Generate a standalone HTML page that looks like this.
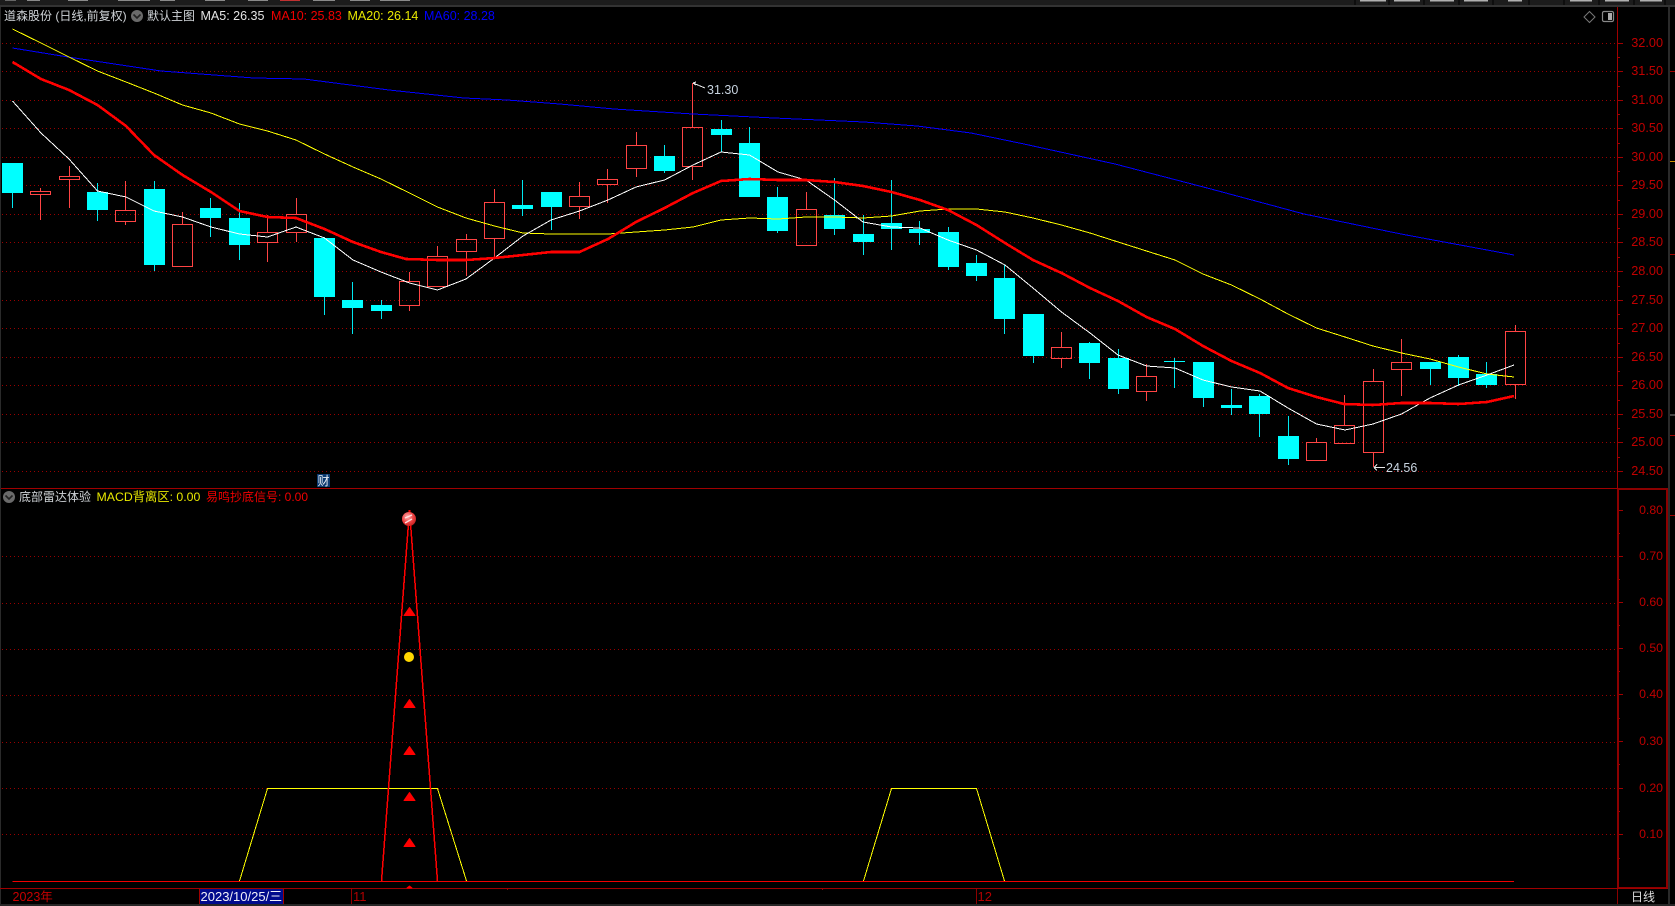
<!DOCTYPE html>
<html lang="zh">
<head>
<meta charset="utf-8">
<title>道森股份 K线</title>
<style>
html,body{margin:0;padding:0;background:#000;width:1675px;height:906px;overflow:hidden}
svg{display:block}
text{font-family:"Liberation Sans","Noto Sans CJK SC",sans-serif;font-size:12px}
.c{shape-rendering:crispEdges}
.ax text{fill:#c00000;text-anchor:end;font-size:12.7px}
.ax2 text{fill:#c00000;text-anchor:end;font-size:12.3px}
</style>
</head>
<body>
<svg width="1675" height="906" viewBox="0 0 1675 906" xmlns="http://www.w3.org/2000/svg">
<defs>
<radialGradient id="b" cx="40%" cy="35%" r="70%"><stop offset="0" stop-color="#ffb0b0"/><stop offset=".6" stop-color="#ee4040"/><stop offset="1" stop-color="#c02020"/></radialGradient>
</defs>
<rect width="1675" height="906" fill="#000"/>

<!-- top bar -->
<g class="c">
<rect x="0" y="0" width="1675" height="5" fill="#1c1c1c"/>
<rect x="0" y="5" width="1675" height="2" fill="#333"/>
<path d="M1355 0v5M1389 0v5M1424 0v5M1459 0v5M1493 0v5M1529 0v5M1564 0v5M1599 0v5M1634 0v5M1665 0v5" stroke="#000" stroke-width="1" fill="none"/>
<path d="M27 0h13v1h-13zM68 0h20v1h-20zM118 0h32v1h-32zM160 0h15v1h-15zM205 0h20v1h-20zM248 0h20v1h-20zM313 0h22v1h-22zM350 0h20v1h-20zM380 0h30v1h-30z" fill="#8a8a8a"/>
<path d="M1360 0h26v1.5h-26zM1394 0h26v1.5h-26zM1430 0h24v1.5h-24zM1464 0h24v1.5h-24zM1508 0h14v1.5h-14zM1570 0h22v1.5h-22zM1605 0h24v1.5h-24zM1640 0h22v1.5h-22z" fill="#b0b0b0"/>
<rect x="280" y="0" width="20" height="1" fill="#c03030"/>
<rect x="5" y="0" width="11" height="1" fill="#666"/>
<rect x="0" y="7" width="1" height="897" fill="#2a2a2a"/>
<rect x="1668" y="7" width="2" height="897" fill="#2a2a2a"/>
<rect x="0" y="904" width="1675" height="2" fill="#262626"/>
</g>

<!-- grid upper -->
<path class="c" d="M2 43.5H1617M2 71.5H1617M2 100.5H1617M2 128.5H1617M2 157.5H1617M2 185.5H1617M2 214.5H1617M2 242.5H1617M2 271.5H1617M2 300.5H1617M2 328.5H1617M2 357.5H1617M2 385.5H1617M2 414.5H1617M2 442.5H1617M2 471.5H1617" stroke="#9a0000" stroke-width="1" stroke-dasharray="1 3" fill="none"/>
<!-- grid lower -->
<path class="c" d="M2 556.5H1617M2 603.5H1617M2 649.5H1617M2 695.5H1617M2 742.5H1617M2 788.5H1617M2 834.5H1617" stroke="#9a0000" stroke-width="1" stroke-dasharray="1 3" fill="none"/>

<!-- axes -->
<g class="c" fill="none" stroke="#a00000" stroke-width="1">
<path d="M1617.5 7V489"/>
<path d="M1617 43.5h6M1617 71.5h6M1617 100.5h6M1617 128.5h6M1617 157.5h6M1617 185.5h6M1617 214.5h6M1617 242.5h6M1617 271.5h6M1617 300.5h6M1617 328.5h6M1617 357.5h6M1617 385.5h6M1617 414.5h6M1617 442.5h6M1617 471.5h6"/>
<path d="M1617 57.5h3M1617 86.5h3M1617 114.5h3M1617 143.5h3M1617 171.5h3M1617 200.5h3M1617 228.5h3M1617 257.5h3M1617 286.5h3M1617 314.5h3M1617 343.5h3M1617 371.5h3M1617 400.5h3M1617 428.5h3M1617 457.5h3"/>
<path d="M1617 510.5h6M1617 556.5h6M1617 602.5h6M1617 648.5h6M1617 694.5h6M1617 741.5h6M1617 788.5h6M1617 834.5h6M1617 533.5h3M1617 579.5h3M1617 625.5h3M1617 671.5h3M1617 718.5h3M1617 764.5h3M1617 811.5h3M1617 858.5h3"/>
</g>
<rect class="c" x="1618" y="489" width="49" height="399" fill="none" stroke="#8c0000" stroke-width="2"/>
<rect class="c" x="1" y="488" width="1617" height="1" fill="#a00000"/>
<rect class="c" x="0" y="888" width="1668" height="1" fill="#a00000"/>
<rect class="c" x="1617" y="889" width="1" height="15" fill="#8c0000"/>
<g class="c">
<rect x="1670" y="71" width="5" height="1" fill="#a00000"/>
<rect x="1670" y="161" width="5" height="1" fill="#d09000"/>
<rect x="1670" y="254" width="5" height="1" fill="#a00000"/>
<rect x="1670" y="414" width="5" height="2" fill="#444"/>
<rect x="1670" y="435" width="5" height="1" fill="#a00000"/>
<rect x="1670" y="515" width="5" height="1" fill="#a00000"/>
</g>

<!-- axis labels -->
<g class="ax">
<text x="1663" y="47">32.00</text><text x="1663" y="75">31.50</text><text x="1663" y="104">31.00</text><text x="1663" y="132">30.50</text><text x="1663" y="161">30.00</text><text x="1663" y="189">29.50</text><text x="1663" y="218">29.00</text><text x="1663" y="246">28.50</text><text x="1663" y="275">28.00</text><text x="1663" y="304">27.50</text><text x="1663" y="332">27.00</text><text x="1663" y="361">26.50</text><text x="1663" y="389">26.00</text><text x="1663" y="418">25.50</text><text x="1663" y="446">25.00</text><text x="1663" y="475">24.50</text>
</g>
<g class="ax2">
<text x="1663" y="514">0.80</text><text x="1663" y="560">0.70</text><text x="1663" y="606">0.60</text><text x="1663" y="652">0.50</text><text x="1663" y="698">0.40</text><text x="1663" y="745">0.30</text><text x="1663" y="792">0.20</text><text x="1663" y="838">0.10</text>
</g>

<!-- cyan wicks -->
<path class="c" fill="none" stroke="#00e8f0" stroke-width="1" d="M12.5 163V208M97.5 183V221M154.5 181V271M210.5 198V237M239.5 203V260M324.5 237V315M352.5 282V334M381.5 300V319M522.5 180V216M551.5 192V230M664.5 145V173M721.5 120V152M749.5 127V197M777.5 187V233M834.5 178V235M863.5 215V255M891.5 180V250M919.5 221V245M948.5 227V270M976.5 255V281M1004.5 265V334M1033.5 314V363M1089.5 342V379M1118.5 349V394M1174.5 358V388M1203.5 362V407M1231.5 389V415M1259.5 394V437M1288.5 416V465M1430.5 362V385M1458.5 355V386M1486.5 362V388"/>
<!-- cyan bodies -->
<path class="c" fill="#00ffff" d="M2 163h21v30h-21zM87 192h21v18h-21zM144 189h21v76h-21zM200 208h21v10h-21zM229 218h21v27h-21zM314 238h21v59h-21zM342 300h21v8h-21zM371 305h21v6h-21zM512 205h21v4h-21zM541 192h21v15h-21zM654 156h21v15h-21zM711 129h21v6h-21zM739 143h21v54h-21zM767 197h21v34h-21zM824 215h21v14h-21zM853 234h21v8h-21zM881 223h21v6h-21zM909 229h21v4h-21zM938 232h21v35h-21zM966 263h21v13h-21zM994 278h21v41h-21zM1023 314h21v42h-21zM1079 343h21v20h-21zM1108 358h21v31h-21zM1164 361h21v1h-21zM1193 362h21v36h-21zM1221 405h21v3h-21zM1249 396h21v18h-21zM1278 436h21v23h-21zM1420 362h21v7h-21zM1448 357h21v21h-21zM1476 374h21v11h-21z"/>
<!-- red candles -->
<path class="c" fill="none" stroke="#ff4444" stroke-width="1" d="
M40.5 188V191M40.5 194V220M30.5 191.5h20v3h-20z
M69.5 166V176M69.5 180V208M59.5 176.5h20v3h-20z
M125.5 181V210M125.5 221V225M115.5 210.5h20v11h-20z
M182.5 212V224M172.5 224.5h20v42h-20z
M267.5 215V232M267.5 242V262M257.5 232.5h20v10h-20z
M296.5 198V214M296.5 232V242M286.5 214.5h20v18h-20z
M409.5 272V281M409.5 305V311M399.5 281.5h20v24h-20z
M437.5 246V256M427.5 256.5h20v30h-20z
M466.5 234V239M466.5 251V276M456.5 239.5h20v12h-20z
M494.5 189V202M494.5 238V258M484.5 202.5h20v36h-20z
M579.5 182V196M579.5 206V219M569.5 196.5h20v10h-20z
M607.5 169V179M607.5 184V203M597.5 179.5h20v5h-20z
M636.5 132V145M636.5 168V177M626.5 145.5h20v23h-20z
M692.5 83V127M692.5 166V180M682.5 127.5h20v39h-20z
M806.5 192V209M796.5 209.5h20v36h-20z
M1061.5 332V347M1061.5 358V368M1051.5 347.5h20v11h-20z
M1146.5 364V376M1146.5 391V401M1136.5 376.5h20v15h-20z
M1316.5 438V442M1306.5 442.5h20v18h-20z
M1344.5 395V425M1334.5 425.5h20v18h-20z
M1373.5 369V381M1373.5 452V467M1363.5 381.5h20v71h-20z
M1401.5 339V362M1401.5 369V396M1391.5 362.5h20v7h-20z
M1515.5 325V331M1515.5 384V399M1505.5 331.5h20v53h-20z"/>

<!-- MA60 -->
<polyline class="c" fill="none" stroke="#0000ff" stroke-width="1" points="12.5,48 68,57 161,71 254,78 304,79 389,90 464,98 507,100 560,104 614,109 693,114 774,118 864,122 917,126 971,133 1024,144 1115,164 1211,189 1304,214 1401,234 1514,255"/>
<!-- MA20 -->
<polyline class="c" fill="none" stroke="#ffff00" stroke-width="1" points="12.5,29 41,43 69,57 97.5,71 126,82 154,93 182.5,105 211,113 239.5,124 267.5,131 296,140 324.5,154 353,167 381,179 409.5,193 437.5,207 466,218 494.5,226 523,233 551,234 579.5,234 608,234 636,232 664.5,230 693,227 721,220 749.5,218 778,219 806,217 834.5,217 863,218 891.5,216 920,211 948,209 976.5,209 1005,212 1033,218 1061.5,225 1090,233 1115,241 1146.5,251 1175,260 1203,274 1231.5,285 1260,299 1288,314 1316.5,328 1345,337 1373,346 1401.5,353 1430,359 1458.5,367 1487,374 1514,377"/>
<!-- MA5 -->
<polyline class="c" fill="none" stroke="#ffffff" stroke-width="1" points="12.5,101 41,133 69,159 97.5,191 126,197 154,211 182.5,217 211,227 239.5,234 267.5,237 296,227 324.5,238 353,260 381,272 409.5,283 437.5,290 466,279 494.5,258 523,236 551,220 579.5,211 608,200 636,187 664.5,180 693,165 721,152 749.5,155 778,172 806,180 834.5,200 863,222 891.5,227 920,228 948,240 976.5,250 1005,265 1033,288 1061.5,312 1090,333 1118,355 1146.5,366 1175,368 1203,380 1231.5,387 1260,391 1288,408 1316.5,424 1345,430 1373,424 1401.5,414 1430,398 1458.5,385 1487,375 1514,365"/>
<!-- MA10 -->
<polyline class="c" fill="none" stroke="#ff0000" stroke-width="2.6" points="12.5,62 41,79 69,90 97.5,105 126,126 154,155 182.5,175 211,192 239.5,211 267.5,217 296,218 324.5,229 353,242 381,252 406,259 437.5,260 466,260 494.5,258 523,255 551,252 579.5,252 608,239 636,222 664.5,208 693,193 721,181 749.5,179 778,180 806,180 834.5,182 863,186 891.5,192 920,200 948,210 976.5,225 1005,243 1033,260 1061.5,273 1090,288 1118,301 1146.5,317 1175,329 1203,346 1231.5,361 1260,373 1288,388 1316.5,397 1344,404 1373,405 1401.5,403 1430,403 1458.5,404 1487,402 1514,396"/>

<!-- extrema annotations -->
<path class="c" fill="none" stroke="#e8e8e8" stroke-width="1" d="M693 83L705 88M693 83l3 -1M693 83l3 2"/>
<text x="707" y="94" fill="#c8d4e0" style="font-size:12.5px">31.30</text>
<path class="c" fill="none" stroke="#e8e8e8" stroke-width="1" d="M1374 467.5H1385M1374 467.5l3 -3M1374 467.5l3 3"/>
<text x="1386" y="472" fill="#c8d4e0" style="font-size:12.5px">24.56</text>

<!-- legend -->
<text x="4" y="20" fill="#d0d4d8">道森股份 (日线,前复权)</text>
<circle cx="137" cy="16" r="6" fill="#6a6a6a"/>
<path d="M133.5 14.5l3.5 3.5 3.5-3.5" fill="none" stroke="#222" stroke-width="1.6"/>
<text x="147" y="20" fill="#d0d4d8">默认主图</text>
<text x="200.5" y="20" fill="#e4e4e4" style="font-size:12.5px">MA5: 26.35</text>
<text x="271" y="20" fill="#f00000" style="font-size:12.5px">MA10: 25.83</text>
<text x="347.5" y="20" fill="#e8e800" style="font-size:12.5px">MA20: 26.14</text>
<text x="424" y="20" fill="#0000ff" style="font-size:12.5px">MA60: 28.28</text>

<!-- top right icons -->
<path d="M1589.5 11.5l5.5 5.5-5.5 5.5-5.5-5.5z" fill="none" stroke="#777" stroke-width="1"/>
<rect x="1602.5" y="11.5" width="11" height="10" rx="1.5" fill="none" stroke="#888" stroke-width="1.2"/>
<rect x="1608" y="13" width="4" height="7" fill="#aaa"/>

<!-- 财 marker -->
<rect x="317" y="474" width="13" height="13" fill="#0c3a70"/>
<text x="317.5" y="485" fill="#e8eef4">财</text>

<!-- lower panel legend -->
<circle cx="9" cy="497" r="6" fill="#6a6a6a"/>
<path d="M5.5 495.5l3.5 3.5 3.5-3.5" fill="none" stroke="#222" stroke-width="1.6"/>
<text x="19" y="501" fill="#d0d4d8">底部雷达体验</text>
<text x="96.5" y="501" fill="#e8e800" style="font-size:12.3px">MACD背离区: 0.00</text>
<text x="206" y="501" fill="#f00000">易鸣抄底信号: 0.00</text>

<!-- lower chart -->
<polyline class="c" fill="none" stroke="#ffff00" stroke-width="1" points="239.5,881 267.5,788.5 437.5,788.5 466.5,881"/>
<polyline class="c" fill="none" stroke="#ffff00" stroke-width="1" points="863.5,881 891.5,788.5 976.5,788.5 1004.5,881"/>
<polyline class="c" fill="none" stroke="#ff0000" stroke-width="1.5" points="381.5,881 409.5,510 437.5,881"/>
<path class="c" d="M12.5 881.5H1514" stroke="#f00000" stroke-width="1" fill="none"/>

<g fill="#ff0000" stroke="#ff0000" stroke-width="1" stroke-linejoin="round">
<path d="M409.5 607.5l5.5 8h-11z"/>
<path d="M409.5 699.5l5.5 8h-11z"/>
<path d="M409.5 746.5l5.5 8h-11z"/>
<path d="M409.5 792.5l5.5 8h-11z"/>
<path d="M409.5 838.5l5.5 8h-11z"/>
<path d="M409.5 886l2.5 2h-5z"/>
</g>
<circle cx="409" cy="657" r="5" fill="#ffd800"/>
<path d="M409.5 510v3" stroke="#f00000" stroke-width="1"/>
<circle cx="409" cy="519" r="7" fill="url(#b)"/>
<path d="M405 518l7-3M405 523l7-4" fill="none" stroke="#ffe0e0" stroke-width="1.3"/>

<!-- time axis -->
<text x="12.5" y="901" fill="#c80000" style="font-size:12.5px">2023年</text>
<rect class="c" x="199" y="889" width="85" height="15" fill="#000a8c"/>
<path class="c" d="M199.5 889v15M283.5 889v15" stroke="#a00000" stroke-width="1"/>
<text x="200.5" y="901" fill="#f0f0f8" style="font-size:13px">2023/10/25/三</text>
<rect class="c" x="351" y="889" width="1" height="15" fill="#8c0000"/>
<text x="353" y="901" fill="#b00000" style="font-size:13px">11</text>
<rect class="c" x="976" y="889" width="1" height="15" fill="#8c0000"/>
<text x="977.5" y="901" fill="#b00000" style="font-size:13px">12</text>
<rect class="c" x="507" y="888" width="1" height="2" fill="#a00000"/>
<rect class="c" x="822" y="888" width="1" height="2" fill="#a00000"/>
<text x="1631" y="901" fill="#dcdcdc">日线</text>
</svg>
</body>
</html>
